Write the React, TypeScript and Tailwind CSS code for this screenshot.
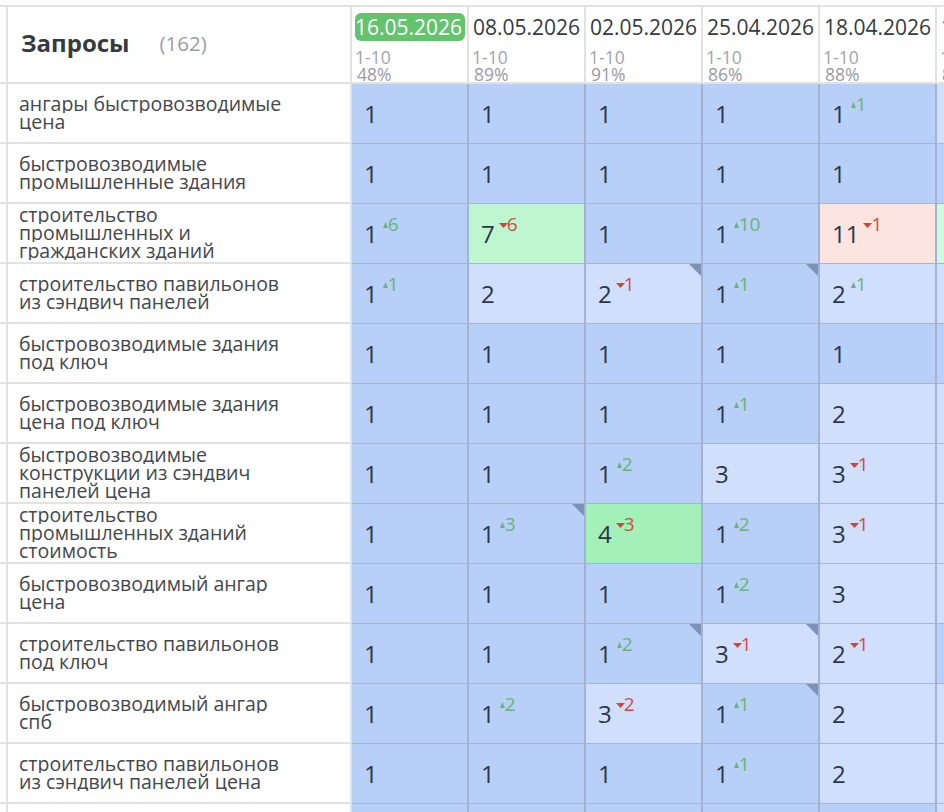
import React from "react";

type Cell = { v: number; d?: number; bg?: string; corner?: boolean };

const B = "bg-[#b8cff8]";
const L = "bg-[#d0dffb]";

const n = (v: number, d?: number, bg?: string, corner?: boolean): Cell => ({ v, d, bg, corner });

const dates = [
  { date: "16.05.2026", pct: "48%", active: true },
  { date: "08.05.2026", pct: "89%" },
  { date: "02.05.2026", pct: "91%" },
  { date: "25.04.2026", pct: "86%" },
  { date: "18.04.2026", pct: "88%" },
  { date: "11.04.2026", pct: "87%" },
];

const rows: { q: string[]; cells: Cell[]; last: string }[] = [
  { q: ["ангары быстровозводимые", "цена"], cells: [n(1), n(1), n(1), n(1), n(1, 1)], last: L },
  { q: ["быстровозводимые", "промышленные здания"], cells: [n(1), n(1), n(1), n(1), n(1)], last: B },
  {
    q: ["строительство", "промышленных и", "гражданских зданий"],
    cells: [n(1, 6), n(7, -6, "bg-[#bdf6cf]"), n(1), n(1, 10), n(11, -1, "bg-[#fce5e1]")],
    last: "bg-[#cefadd]",
  },
  {
    q: ["строительство павильонов", "из сэндвич панелей"],
    cells: [n(1, 1), n(2, undefined, L), n(2, -1, L, true), n(1, 1, B, true), n(2, 1, L)],
    last: L,
  },
  { q: ["быстровозводимые здания", "под ключ"], cells: [n(1), n(1), n(1), n(1), n(1)], last: B },
  { q: ["быстровозводимые здания", "цена под ключ"], cells: [n(1), n(1), n(1), n(1, 1), n(2, undefined, L)], last: L },
  {
    q: ["быстровозводимые", "конструкции из сэндвич", "панелей цена"],
    cells: [n(1), n(1), n(1, 2), n(3, undefined, L), n(3, -1, L)],
    last: L,
  },
  {
    q: ["строительство", "промышленных зданий", "стоимость"],
    cells: [n(1), n(1, 3, B, true), n(4, -3, "bg-[#a3f1b9]"), n(1, 2), n(3, -1, L)],
    last: L,
  },
  { q: ["быстровозводимый ангар", "цена"], cells: [n(1), n(1), n(1), n(1, 2), n(3, undefined, L)], last: L },
  {
    q: ["строительство павильонов", "под ключ"],
    cells: [n(1), n(1), n(1, 2, B, true), n(3, -1, L, true), n(2, -1, L)],
    last: B,
  },
  {
    q: ["быстровозводимый ангар", "спб"],
    cells: [n(1), n(1, 2), n(3, -2, L), n(1, 1, B, true), n(2, undefined, L)],
    last: L,
  },
  {
    q: ["строительство павильонов", "из сэндвич панелей цена"],
    cells: [n(1), n(1), n(1), n(1, 1), n(2, undefined, L)],
    last: L,
  },
  { q: [""], cells: [n(1), n(1), n(1), n(1), n(1)], last: L },
];

function Delta({ d }: { d: number }) {
  const up = d > 0;
  return (
    <span className={`absolute left-0 top-[10px] flex items-center text-[19px] leading-[20px] ${up ? "text-[#64b677]" : "text-[#d44a45]"}`}>
      {up ? (
        <svg width="5" height="6" viewBox="0 0 5 6" className="ml-[5px] mt-[2px] shrink-0">
          <polygon points="2.5,0 5,6 0,6" fill="#66b57c" />
        </svg>
      ) : (
        <svg width="9" height="5" viewBox="0 0 9 5" className="ml-[4px] mr-[-1px] mt-[2px] shrink-0">
          <polygon points="0,0 9,0 4.5,5" fill="#d8403e" />
        </svg>
      )}
      <span>{Math.abs(d)}</span>
    </span>
  );
}

function DataCell({ cell }: { cell: Cell }) {
  return (
    <div className={`relative flex h-full w-[117px] shrink-0 items-center border-r-2 border-b border-r-[#a3b2d3] border-b-[#a7b4d1] pl-[12px] ${cell.bg ?? B}`}>
      <span className="text-[24px] leading-[30px] text-[#2b3648]">{cell.v}</span>
      {cell.d !== undefined && (
        <span className="relative h-[60px] w-0 self-start">
          <Delta d={cell.d} />
        </span>
      )}
      {cell.corner && (
        <svg width="12" height="12" viewBox="0 0 12 12" className="absolute right-0 top-0">
          <polygon points="0,0 12,0 12,12" fill="#7d92b6" />
        </svg>
      )}
    </div>
  );
}

export default function App() {
  return (
    <div className="h-[812px] w-[944px] overflow-hidden bg-white pt-[5px] font-['Open_Sans',sans-serif]">
      <div className="flex h-[79px] border-t-2 border-[#e2e2e3]">
        <div className="h-full w-[8px] shrink-0 border-r-2 border-b-2 border-[#e2e2e3]" />
        <div className="flex h-full w-[344px] shrink-0 items-center border-r-2 border-b-2 border-[#e2e2e3] pl-[13px] pb-[4px]">
          <span className="text-[24px] font-bold leading-[30px] text-[#363a40]">Запросы</span>
          <span className="ml-[30px] text-[20.5px] leading-[30px] text-[#9c9cab]">(162)</span>
        </div>
        {dates.map((d) => (
          <div key={d.date} className="flex h-full w-[117px] shrink-0 flex-col overflow-hidden border-r-2 border-b-2 border-[#e2e2e3] pl-[3px] pt-[6px]">
            <span
              className={`flex h-[28px] w-[110px] shrink-0 items-center whitespace-nowrap rounded-[6px] text-[21px] leading-[28px] ${
                d.active ? "bg-[#64c36e] pl-0 text-white" : "pl-[1px] text-[#353a40]"
              }`}
            >
              {d.date}
            </span>
            <span className="mt-[8px] pl-0 text-[17.5px] leading-[17px] text-[#a3a3ab]">1-10</span>
            <span className="pl-[2px] text-[17.5px] leading-[17px] text-[#9a9aa5]">{d.pct}</span>
          </div>
        ))}
      </div>
      {rows.map((r, i) => (
        <div key={i} className="flex h-[60px]">
          <div className="h-full w-[8px] shrink-0 border-r-2 border-b-2 border-[#e2e2e3]" />
          <div className="flex h-full w-[344px] shrink-0 flex-col justify-center border-r-2 border-b-2 border-[#e2e2e3] pl-[11px] text-[19.5px] text-[#44474c]">
            {r.q.map((line, j) => (
              <div key={j} className="h-[18px] overflow-hidden whitespace-nowrap leading-[18px]">
                {line}
              </div>
            ))}
          </div>
          {r.cells.map((c, j) => (
            <DataCell key={j} cell={c} />
          ))}
          <div className={`h-full w-[117px] shrink-0 border-b border-b-[#a7b4d1] ${r.last}`} />
        </div>
      ))}
    </div>
  );
}
